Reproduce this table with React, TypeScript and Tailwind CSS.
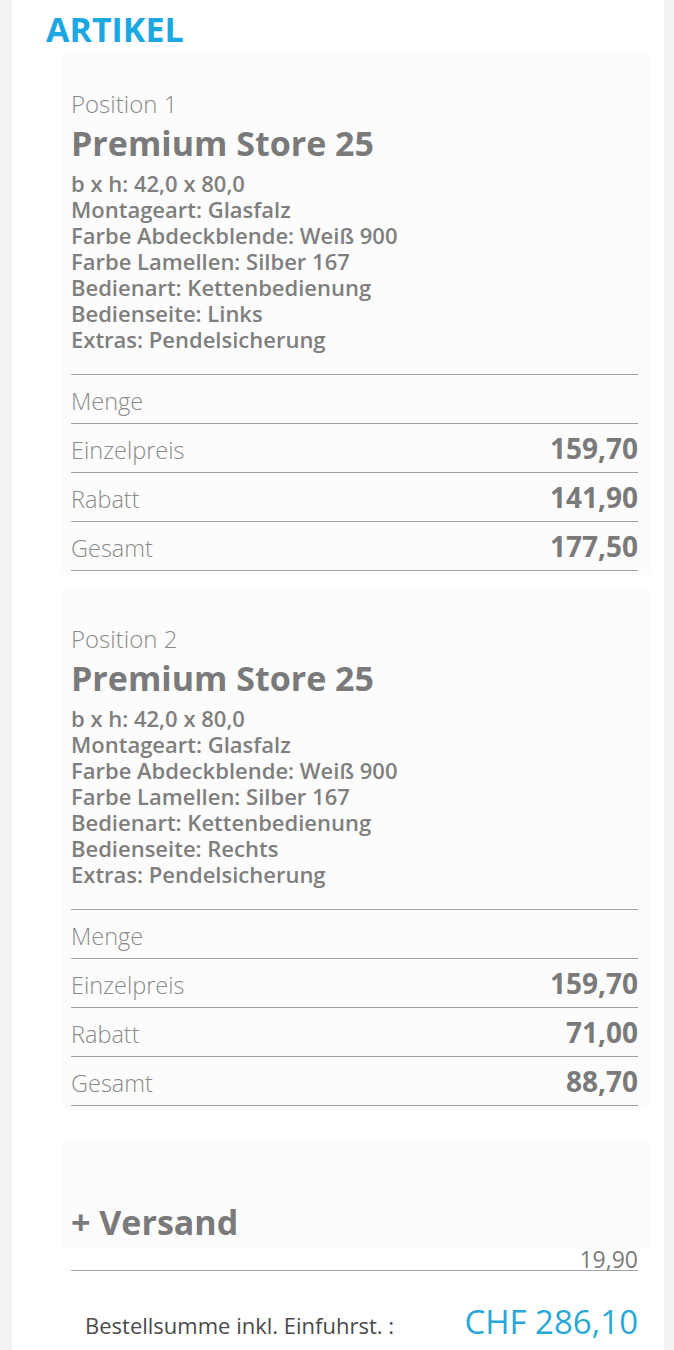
import React from 'react';

type Position = {
  nr: number;
  name: string;
  details: string[];
  einzelpreis: string;
  rabatt: string;
  gesamt: string;
};

const positions: Position[] = [
  {
    nr: 1,
    name: 'Premium Store 25',
    details: [
      'b x h: 42,0 x 80,0',
      'Montageart: Glasfalz',
      'Farbe Abdeckblende: Weiß 900',
      'Farbe Lamellen: Silber 167',
      'Bedienart: Kettenbedienung',
      'Bedienseite: Links',
      'Extras: Pendelsicherung',
    ],
    einzelpreis: '159,70',
    rabatt: '141,90',
    gesamt: '177,50',
  },
  {
    nr: 2,
    name: 'Premium Store 25',
    details: [
      'b x h: 42,0 x 80,0',
      'Montageart: Glasfalz',
      'Farbe Abdeckblende: Weiß 900',
      'Farbe Lamellen: Silber 167',
      'Bedienart: Kettenbedienung',
      'Bedienseite: Rechts',
      'Extras: Pendelsicherung',
    ],
    einzelpreis: '159,70',
    rabatt: '71,00',
    gesamt: '88,70',
  },
];

const font = { fontFamily: '"Open Sans", "Noto Sans", sans-serif' };

const PriceRow: React.FC<{ label: string; value?: string }> = ({ label, value }) => (
  <div className="flex justify-between items-baseline h-[49px] pt-[10px] border-b border-[#a3a3a3]">
    <span className="text-[23.5px] leading-none font-light text-[#8a8a8a]">{label}</span>
    <span className="text-[28px] leading-none font-bold text-[#7a7a7a]">{value || '\u00a0'}</span>
  </div>
);

const PositionCard: React.FC<{ pos: Position }> = ({ pos }) => (
  <div className="bg-[#fcfcfc] pl-[9px] pr-[12px] pt-[39px] pb-[4px]">
    <div className="text-[24px] leading-none font-light text-[#8a8a8a]">Position {pos.nr}</div>
    <h2 className="mt-[10px] text-[34px] leading-none font-bold text-[#7a7a7a]">{pos.name}</h2>
    <div className="mt-[10px] text-[22px] leading-[26px] font-semibold text-[#7f7f7f]">
      {pos.details.map((d) => (
        <div key={d}>{d}</div>
      ))}
    </div>
    <div className="mt-[22px] border-t border-[#a3a3a3]">
      <PriceRow label="Menge" />
      <PriceRow label="Einzelpreis" value={pos.einzelpreis} />
      <PriceRow label="Rabatt" value={pos.rabatt} />
      <PriceRow label="Gesamt" value={pos.gesamt} />
    </div>
  </div>
);

export default function App() {
  return (
    <div className="min-h-screen bg-[#f2f2f2] pl-[12px] pr-[10px]" style={font}>
      <div className="min-h-screen bg-white pt-[12px] pb-[20px]">
        <h1 className="pl-[34px] text-[34px] leading-none font-bold text-[#1ba7e2]">ARTIKEL</h1>

        <div className="mt-[7px] ml-[50px] mr-[14px] flex flex-col gap-[13px]">
          {positions.map((p) => (
            <PositionCard key={p.nr} pos={p} />
          ))}
        </div>

        {/* Versand */}
        <div className="mt-[30px] ml-[50px] mr-[14px]">
          <div className="bg-[#fcfcfc] pl-[9px] pr-[12px] pt-[65px] pb-[10px]">
            <div className="text-[34px] leading-none font-bold text-[#7a7a7a]">+ Versand</div>
          </div>
          <div className="pl-[9px] pr-[12px]">
            <div className="flex justify-end border-b border-[#a3a3a3] text-[23px] leading-[21px] text-[#7a7a7a]">
              19,90
            </div>
          </div>
        </div>

        <div className="mt-[34px] ml-[50px] mr-[14px] pl-[23px] pr-[12px] flex justify-between items-baseline">
          <span className="text-[22px] leading-none text-[#4a4a4a]">Bestellsumme inkl. Einfuhrst. :</span>
          <span className="text-[33px] leading-none text-[#28a8d8]">CHF 286,10</span>
        </div>
      </div>
    </div>
  );
}
